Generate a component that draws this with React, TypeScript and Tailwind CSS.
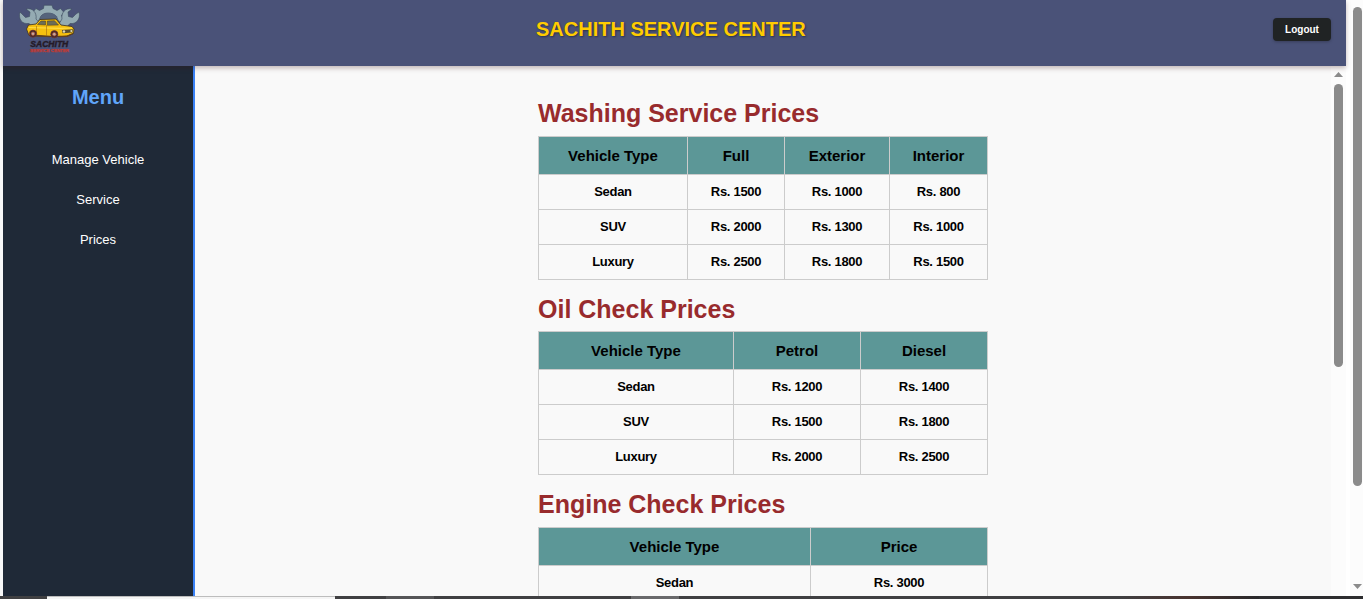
import React from "react";

type PriceTable = {
  title: string;
  columns: { label: string; width: string }[];
  rows: string[][];
  headingGap: string;
};

const tables: PriceTable[] = [
  {
    title: "Washing Service Prices",
    columns: [
      { label: "Vehicle Type", width: "w-[149px]" },
      { label: "Full", width: "w-[97px]" },
      { label: "Exterior", width: "w-[105px]" },
      { label: "Interior", width: "w-[98px]" },
    ],
    rows: [
      ["Sedan", "Rs. 1500", "Rs. 1000", "Rs. 800"],
      ["SUV", "Rs. 2000", "Rs. 1300", "Rs. 1000"],
      ["Luxury", "Rs. 2500", "Rs. 1800", "Rs. 1500"],
    ],
    headingGap: "mb-[9px]",
  },
  {
    title: "Oil Check Prices",
    columns: [
      { label: "Vehicle Type", width: "w-[195px]" },
      { label: "Petrol", width: "w-[127px]" },
      { label: "Diesel", width: "w-[127px]" },
    ],
    rows: [
      ["Sedan", "Rs. 1200", "Rs. 1400"],
      ["SUV", "Rs. 1500", "Rs. 1800"],
      ["Luxury", "Rs. 2000", "Rs. 2500"],
    ],
    headingGap: "mb-2",
  },
  {
    title: "Engine Check Prices",
    columns: [
      { label: "Vehicle Type", width: "w-[272px]" },
      { label: "Price", width: "w-[177px]" },
    ],
    rows: [["Sedan", "Rs. 3000"]],
    headingGap: "mb-[9px]",
  },
];

function Logo() {
  return (
    <svg className="h-[54px] w-[68px]" viewBox="0 0 68 54" aria-hidden="true">
      <g stroke="#3b4a5c" strokeWidth="0.6" strokeLinejoin="round" fill="#94abb3">
        <path d="M18 17 L19 13 L16.5 10.5 L20 6.5 L23.5 8.5 L27.5 6.5 L28 3.3 L36 3.3 L37 6.5 L41 8.5 L44.5 6.5 L48 10.5 L45.5 13.5 L48 19 L43 20 L40 14 C36 10 28 10 25 14 L22 20 Z" />
        <path d="M10 7 L14 10 L13.5 14.5 L9.5 15.5 L6 12 L4 10 C2 17 6 22.5 13 21.5 L21 29 L27 25 L20 17 C21 11 17 5.5 10 7 Z" />
        <path d="M56 7 L52 10 L52.5 14.5 L56.5 15.5 L60 12 L63 10 C65 17 60 22.5 54 21.5 L48 28 L41 25 L46 17 C45 11 49 5.5 56 7 Z" />
      </g>
      <path d="M25 14 C29 10 37 10 41 14.5 L42 19 L23 20 Z" fill="#56647c" />
      <path
        d="M10.5 27 L12.5 23 L20 22 L24 17.5 L40 17 L45 23 L56 24.5 L58 27 L57.5 31.5 L51 34 L46 34.5 L29 34.5 L13 33.5 Z"
        fill="#f5c010"
        stroke="#3a2f20"
        strokeWidth="0.8"
        strokeLinejoin="round"
      />
      <path d="M21.5 22.5 L25 19 L29.5 19 L29.5 23 Z M31.3 19 L38.5 18.7 L42.5 23 L31.3 23.3 Z" fill="#6b6d58" stroke="#4a3817" strokeWidth="0.5" />
      <path d="M12.5 25.5 L44 26.3 L56 26" fill="none" stroke="#ffdc45" strokeWidth="1.2" />
      <path d="M20.5 24 L20.5 32 M30.5 23 L30.5 33.5" fill="none" stroke="#9d6813" strokeWidth="0.6" />
      <path d="M46 28 L57 27.3 L56.5 30.5 L46.5 31.3 Z" fill="#554d35" />
      <circle cx="48" cy="29.5" r="1.2" fill="#e0d9b4" />
      <circle cx="55.3" cy="28.9" r="1" fill="#e0d9b4" />
      <path d="M20 33.5 L34 34.5 M42 34.5 L51 34.3 L57 31.5" fill="none" stroke="#62401c" strokeWidth="1.3" />
      <g fill="#3a2a2c" stroke="#7b3028" strokeWidth="0.7">
        <circle cx="17" cy="31.7" r="3.6" />
        <circle cx="38.3" cy="32.2" r="3.6" />
      </g>
      <g fill="#c4a79c" stroke="#b0442d" strokeWidth="0.7">
        <circle cx="17" cy="31.7" r="1.8" />
        <circle cx="38.3" cy="32.2" r="1.8" />
      </g>
      <text
        x="33.3"
        y="44.8"
        textAnchor="middle"
        textLength="38"
        lengthAdjust="spacingAndGlyphs"
        fill="#241a26"
        stroke="#241a26"
        strokeWidth="0.4"
        fontFamily="Liberation Sans, sans-serif"
        fontSize="8.8"
        fontStyle="italic"
        fontWeight="900"
      >
        SACHITH
      </text>
      <text
        x="33.5"
        y="49.8"
        textAnchor="middle"
        textLength="39"
        lengthAdjust="spacingAndGlyphs"
        fill="#c23a32"
        stroke="#c23a32"
        strokeWidth="0.25"
        fontFamily="Liberation Sans, sans-serif"
        fontSize="4"
        fontWeight="700"
      >
        SERVICE CENTER
      </text>
    </svg>
  );
}

function Header() {
  return (
    <header className="relative z-10 flex h-[66px] shrink-0 items-start bg-[#4a5278] pl-[13px] pr-[15px] shadow-[0_2px_5px_rgba(60,20,20,0.3)]">
      <div className="w-[68px] pt-[2px]">
        <Logo />
      </div>
      <h1 className="ml-[452px] pt-[17px] text-[20px] leading-6 font-bold text-[#ffcc00] [text-shadow:1px_1px_2px_rgba(0,0,0,0.4)]">
        SACHITH SERVICE CENTER
      </h1>
      <button className="mt-[18px] ml-auto h-[23px] w-[58px] rounded-[4px] bg-[#202324] text-[10px] leading-[23px] font-bold text-white shadow-[0_1px_3px_rgba(0,0,0,0.25)]">
        Logout
      </button>
    </header>
  );
}

function Sidebar() {
  return (
    <aside className="w-48 shrink-0 border-r-2 border-[#3b82f6] bg-[#1f2937] pt-[17px] text-center">
      <h2 className="mb-[31px] text-[20px] leading-7 font-bold text-[#60a5fa]">Menu</h2>
      <nav className="flex flex-col text-[13px] text-white">
        {["Manage Vehicle", "Service", "Prices"].map((item) => (
          <a key={item} className="h-10 leading-[35px]">
            {item}
          </a>
        ))}
      </nav>
    </aside>
  );
}

function PriceSection({ table }: { table: PriceTable }) {
  return (
    <section className="mb-[15px]">
      <h2 className={`h-7 text-[25px] leading-7 font-bold text-[#982b2d] ${table.headingGap}`}>{table.title}</h2>
      <table className="w-[450px] table-fixed border-collapse text-center font-bold text-black">
        <thead>
          <tr className="h-[38px] bg-[#5c9797] text-[15px]">
            {table.columns.map((column) => (
              <th key={column.label} className={`border border-[#cccccc] p-0 leading-5 ${column.width}`}>
                {column.label}
              </th>
            ))}
          </tr>
        </thead>
        <tbody>
          {table.rows.map((row) => (
            <tr key={row[0]} className="h-[35px] text-[13px] tracking-[-0.3px]">
              {row.map((cell, i) => (
                <td key={i} className="border border-[#cccccc] p-0 pb-px leading-5">
                  {cell}
                </td>
              ))}
            </tr>
          ))}
        </tbody>
      </table>
    </section>
  );
}

function InnerScrollbar() {
  return (
    <div className="flex w-[15px] shrink-0 flex-col items-center bg-[#fcfcfc] pt-[6px]">
      <svg className="h-[5px] w-[9px]" viewBox="0 0 9 5">
        <path d="M0 5 L4.5 0 L9 5 Z" fill="#8b8b8b" />
      </svg>
      <div className="mt-[7px] h-[283px] w-[9px] rounded-full bg-[#8b8b8b]" />
    </div>
  );
}

function PageScrollbar() {
  return (
    <div className="flex w-[13px] shrink-0 flex-col items-end bg-[#fcfcfc] pt-[7px] pr-px">
      <div className="h-[479px] w-[9px] rounded-full bg-[#8b8b8b]" />
      <svg className="mt-[98px] h-[5px] w-[9px]" viewBox="0 0 9 5">
        <path d="M0 0 L9 0 L4.5 5 Z" fill="#8b8b8b" />
      </svg>
    </div>
  );
}

function BottomEdge() {
  return (
    <div className="flex h-[3px] shrink-0 bg-[#404042]">
      <div className="w-[47px]" />
      <div className="w-[288px] border-t border-[#bdbdbd] bg-[#f5f5f5]" />
      <div className="w-[51px]" />
      <div className="w-12 bg-[#555557]" />
      <div className="w-[197px]" />
      <div className="w-12 bg-[#69696b]" />
      <div className="w-[440px]" />
      <div className="w-[140px] bg-linear-to-r from-[#404042] via-[#49332f] to-[#29292b]" />
      <div className="flex-1 bg-[#2d2d2f]" />
    </div>
  );
}

export default function App() {
  return (
    <div className="flex h-[599px] w-[1363px] flex-col overflow-hidden bg-[#fcfcfc] font-['Liberation_Sans',Arial,sans-serif]">
      <div className="flex h-[596px] min-h-0">
        <div className="w-[3px] shrink-0 bg-[#f8f8f8]" />
        <div className="flex w-[1343px] shrink-0 flex-col">
          <Header />
          <div className="flex min-h-0 flex-1 overflow-hidden bg-[#f9f9f9]">
            <Sidebar />
            <main className="flex min-w-0 flex-1 justify-center overflow-hidden pt-[33px]">
              <div className="w-[450px]">
                {tables.map((table) => (
                  <PriceSection key={table.title} table={table} />
                ))}
              </div>
            </main>
            <InnerScrollbar />
          </div>
        </div>
        <div className="w-1 shrink-0 bg-white" />
        <PageScrollbar />
      </div>
      <BottomEdge />
    </div>
  );
}
